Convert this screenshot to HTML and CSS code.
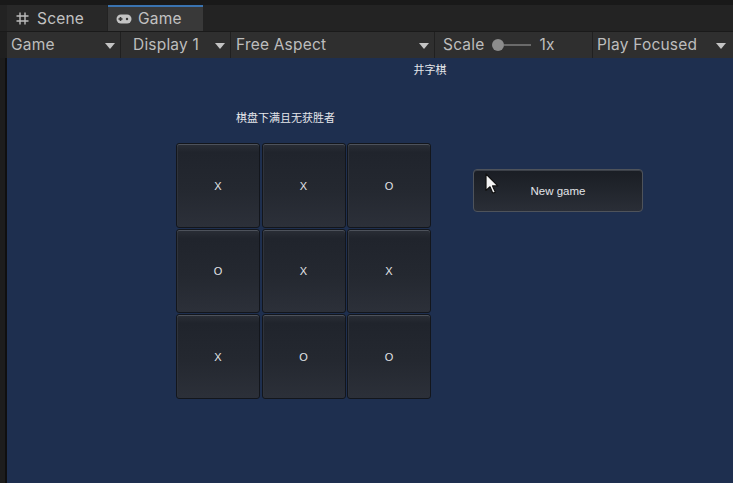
FILE: index.html
```html
<!DOCTYPE html>
<html>
<head>
<meta charset="utf-8">
<link rel="stylesheet" href="styles.css">
</head>
<body>
<div class="editor">
  <div class="topstrip"></div>
  <div class="tabbar">
    <div class="tab scene-tab">
      <svg class="ico-grid" width="13" height="13" viewBox="0 0 13 13"><path d="M4 0.5V12.5M9 0.5V12.5M0.5 4H12.5M0.5 9H12.5" stroke="#bdbdbd" stroke-width="1.4" fill="none"/></svg>
      <span>Scene</span>
    </div>
    <div class="tab game-tab">
      <svg class="ico-pad" width="16" height="10" viewBox="0 0 16 10"><rect x="0.5" y="0.5" width="15" height="9" rx="4.5" fill="#c4c4c4"/><rect x="2.5" y="4.2" width="4" height="1.6" fill="#383838"/><rect x="3.7" y="3" width="1.6" height="4" fill="#383838"/><circle cx="11" cy="5" r="1.2" fill="#383838"/></svg>
      <span>Game</span>
    </div>
  </div>
  <div class="toolbar">
    <div class="gutter"></div>
    <div class="dd w-game"><span>Game</span><i class="arrow"></i></div>
    <div class="dd w-display"><span>Display 1</span><i class="arrow"></i></div>
    <div class="dd w-aspect"><span>Free Aspect</span><i class="arrow"></i></div>
    <div class="dd w-scale"><span>Scale</span><span class="slider"><b class="knob"></b><b class="track"></b></span><span class="scale-val">1x</span></div>
    <div class="dd w-play"><span>Play Focused</span><i class="arrow"></i></div>
  </div>
  <div class="main">
    <div class="side"></div>
    <div class="view">
      <div class="title">井字棋</div>
      <div class="content">
        <div class="left">
          <div class="status">棋盘下满且无获胜者</div>
          <div class="board">
            <div class="cell">X</div><div class="cell">X</div><div class="cell">O</div>
            <div class="cell">O</div><div class="cell">X</div><div class="cell">X</div>
            <div class="cell">X</div><div class="cell">O</div><div class="cell">O</div>
          </div>
        </div>
        <div class="right">
          <div class="newgame">New game
            <svg class="cursor" width="14" height="22" viewBox="0 0 14 22"><path d="M1 1V17.5L5 13.8L7.8 20.2L10.3 19.1L7.6 12.9H12.8Z" fill="#f4f4f4" stroke="#111" stroke-width="1.2" stroke-linejoin="round"/></svg>
          </div>
        </div>
      </div>
    </div>
  </div>
</div>
</body>
</html>
```
FILE: styles.css
```css
* { box-sizing: border-box; }
html, body { margin: 0; padding: 0; }
body {
  width: 733px;
  height: 483px;
  overflow: hidden;
  background: #1b1b1b;
  font-family: Inter, "Noto Sans", sans-serif;
}
.editor { width: 733px; height: 483px; display: flex; flex-direction: column; }
.topstrip { height: 5px; background: #191919; }
.tabbar {
  height: 26px;
  background: #232323;
  display: flex;
  padding-left: 7px;
}
.tab {
  display: flex;
  align-items: center;
  color: #c2c2c2;
  font-size: 15.5px;
  letter-spacing: 0.2px;
}
.scene-tab { width: 100px; background: #282828; padding-left: 9px; }
.scene-tab span { margin-left: 8px; }
.game-tab {
  width: 95px;
  margin-left: 1px;
  background: #393939;
  border-top: 2px solid #3a73b0;
  padding-left: 8px;
  padding-bottom: 1px;
}
.game-tab span { margin-left: 6px; }
.toolbar {
  height: 27px;
  display: flex;
  background: #202020;
  border-top: 1px solid #1a1a1a;
}
.gutter { width: 7px; background: #1f1f1f; }
.dd {
  position: relative;
  display: flex;
  align-items: center;
  background: #2f2f2f;
  color: #bdbdbd;
  font-size: 15.5px;
  letter-spacing: 0.2px;
  margin-right: 1px;
  padding-left: 4px;
  padding-bottom: 1px;
}
.arrow {
  position: absolute;
  top: 11px;
  width: 0; height: 0;
  border-left: 5px solid transparent;
  border-right: 5px solid transparent;
  border-top: 6px solid #c4c4c4;
}
.w-game { width: 113px; }
.w-game .arrow { left: 98px; }
.w-display { width: 109px; padding-left: 12px; }
.w-display .arrow { left: 94px; }
.w-aspect { width: 203px; padding-left: 5px; }
.w-aspect .arrow { left: 188px; }
.w-scale { width: 157px; padding-left: 8px; }
.w-play { flex: 1; margin-right: 0; padding-left: 4px; }
.w-play .arrow { left: 123px; }
.slider { display: flex; align-items: center; margin-left: 8px; }
.knob { width: 12px; height: 12px; border-radius: 50%; background: #8c8c8c; }
.track { width: 27px; height: 2px; background: #6a6a6a; }
.scale-val { margin-left: 8px; }
.main { flex: 1; display: flex; }
.side { width: 7px; background: #1d1d1d; border-right: 2px solid #0f0f10; }
.view {
  flex: 1;
  background: #1e2f4f;
  font-family: "Liberation Sans", "Noto Sans CJK SC", sans-serif;
  color: #e4e6ea;
  font-size: 11px;
}
.title {
  margin-left: 383px;
  width: 80px;
  text-align: center;
  padding-top: 5px;
  height: 20px;
  line-height: 14px;
}
.content { display: flex; }
.left { margin-left: 169px; }
.status {
  padding-left: 60px;
  margin-top: 33px;
  height: 32px;
  line-height: 14px;
}
.board {
  width: 255px;
  display: grid;
  grid-template-columns: repeat(3, 84px);
  grid-template-rows: repeat(3, 84.5px);
  gap: 1px 1.5px;
}
.cell, .newgame {
  display: flex;
  align-items: center;
  justify-content: center;
  border: 1px solid #13161c;
  border-radius: 3px;
  background: linear-gradient(#2a2e36 0, #20242c 10%, #242830 55%, #2c3039 100%);
  box-shadow: inset 0 1px 0 #4d525b, inset 1px 0 0 #2f333b;
  color: #e2e4e8;
  font-size: 11px;
  padding-top: 1px;
}
.right { margin-left: 42px; padding-top: 91px; }
.newgame {
  position: relative;
  width: 170px;
  height: 43px;
  border: 1px solid #4e535b;
  border-radius: 4px;
  background: linear-gradient(#1a1d24 0, #20242b 40%, #2a2e37 100%);
  box-shadow: inset 0 1px 0 #3c4048;
  font-size: 11.5px;
}
.cursor { position: absolute; left: 11px; top: 3px; }
```
